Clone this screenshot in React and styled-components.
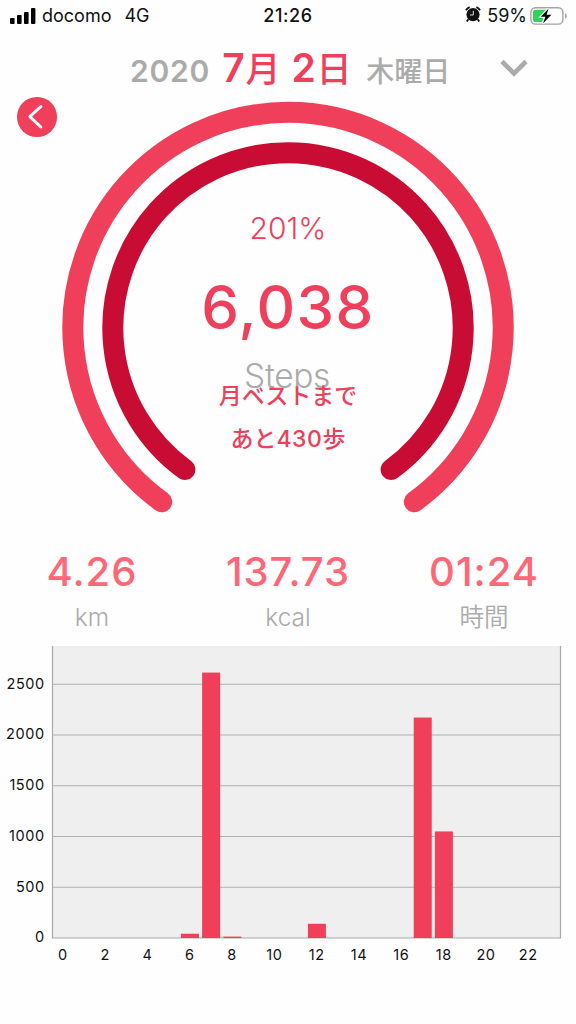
import styled, { createGlobalStyle } from "styled-components";

const hours = [
    { hour: 6, steps: 42 },
    { hour: 7, steps: 2615 },
    { hour: 8, steps: 14 },
    { hour: 12, steps: 140 },
    { hour: 17, steps: 2172 },
    { hour: 18, steps: 1050 },
]

const stats = [
    { value: '4.26', unit: 'km' },
    { value: '137.73', unit: 'kcal' },
    { value: '01:24', unit: '時間' },
]

const yTicks = [500, 1000, 1500, 2000, 2500]
const xTicks = [0, 2, 4, 6, 8, 10, 12, 14, 16, 18, 20, 22]

function StatusBar() {
    return(
        <StatusRow>
            <StatusSide>
                <svg width="26" height="16" viewBox="0 0 26 16">
                    <rect x="0" y="10" width="4.6" height="6" rx="1" />
                    <rect x="7" y="7" width="4.6" height="9" rx="1" />
                    <rect x="14" y="4" width="4.6" height="12" rx="1" />
                    <rect x="21" y="0" width="4.4" height="16" rx="1" />
                </svg>
                <Carrier>docomo</Carrier>
                <Network>4G</Network>
            </StatusSide>
            <Clock>21:26</Clock>
            <StatusSide $end>
                <AlarmIcon />
                <Percent>59%</Percent>
                <BatteryIcon />
            </StatusSide>
        </StatusRow>
    )
}

function AlarmIcon() {
    return(
        <AlarmSvg width="16" height="17" viewBox="0 0 16 17">
            <path d="M1 4.2 A8 8 0 0 1 4.6 1.2 M11.4 1.2 A8 8 0 0 1 15 4.2" fill="none" stroke="#111" strokeWidth="2" />
            <path d="M3.4 13.2 L1.8 15.6 M12.6 13.2 L14.2 15.6" stroke="#111" strokeWidth="1.8" />
            <circle cx="8" cy="8.6" r="6.6" fill="#111" />
            <path d="M8.3 4.8 V9 H5" fill="none" stroke="#ddd" strokeWidth="1" />
        </AlarmSvg>
    )
}

function BatteryIcon() {
    return(
        <svg width="38" height="20" viewBox="0 0 38 20">
            <rect x="0.9" y="1.7" width="32" height="16.4" rx="4.6" fill="none" stroke="#a3a3a3" strokeWidth="1.4" />
            <path d="M35 7 A3.2 3.2 0 0 1 35 12.8 Z" fill="#a3a3a3" />
            <path d="M5.2 3.8 H17 L12 16 H5.2 Q3 16 3 13.8 V6 Q3 3.8 5.2 3.8 Z" fill="#33cf5b" />
            <path d="M18.6 2.6 L10.8 10.8 H15.4 L13 17.4 L21.4 8.8 H16.6 Z" fill="#000" stroke="#fff" strokeWidth="2.2" paintOrder="stroke" />
        </svg>
    )
}

function Dial() {
    return(
        <DialArea>
            <Rings width="576" height="448" viewBox="0 97 576 448">
                <path d="M161.7 501.8 A215.2 215.2 0 1 1 414.3 501.8" stroke="#ef3f5b" />
                <path d="M184.9 469.5 A175.2 175.2 0 1 1 391.1 469.5" stroke="#c90c34" />
            </Rings>
            <DialText>
                <Goal>201%</Goal>
                <StepCount>6,038</StepCount>
                <StepLabel>Steps</StepLabel>
                <Best>月ベストまで<br />あと<span>430</span>歩</Best>
            </DialText>
            <BackButton>
                <svg width="39.5" height="39.5" viewBox="0 0 40 40">
                    <path d="M24.2 9.6 L13 19.8 L24.2 30.4" fill="none" stroke="#fff" strokeWidth="3" strokeLinecap="round" strokeLinejoin="round" />
                </svg>
            </BackButton>
        </DialArea>
    )
}

function HourChart() {
    const base = 292
    const scale = 0.1015

    return(
        <Chart width="576" height="330" viewBox="0 0 576 330">
            <rect x="52" y="0" width="509" height={base} fill="#efefef" />
            {yTicks.map((tick) => (
                <path key={tick} d={`M52 ${base - tick * scale} H561`} stroke="#b0b0b0" strokeWidth="1.2" />
            ))}
            <path d={`M52.5 0 V${base} H560.5 V0`} fill="none" stroke="#a9a9a9" strokeWidth="1.2" />
            {hours.map(({ hour, steps }) => (
                <rect key={hour} x={54 + hour * 21.16} y={base - steps * scale} width="18" height={steps * scale} fill="#ef3f5b" />
            ))}
            {[0, ...yTicks].map((tick) => (
                <text key={tick} x="44.8" y={base + 4.3 - tick * scale} textAnchor="end">{tick}</text>
            ))}
            {xTicks.map((tick) => (
                <text key={tick} x={62.8 + tick * 21.16} y="313.5" textAnchor="middle">{tick}</text>
            ))}
        </Chart>
    )
}

function App() {
    return(
        <Screen>
            <GlobalStyle />
            <StatusBar />
            <DateHeader>
                <Year>2020</Year>
                <Day><b>7</b>月 <b>2</b>日</Day>
                <Weekday>木曜日</Weekday>
                <Chevron width="28" height="19" viewBox="0 0 28 19">
                    <path d="M2 2.5 L14 14.5 L26 2.5" fill="none" stroke="#ababab" strokeWidth="4.6" />
                </Chevron>
            </DateHeader>
            <Dial />
            <Stats>
                {stats.map(({ value, unit }) => (
                    <Stat key={unit}>
                        <StatValue>{value}</StatValue>
                        <StatUnit>{unit}</StatUnit>
                    </Stat>
                ))}
            </Stats>
            <HourChart />
        </Screen>
    )
}

export default App

const GlobalStyle = createGlobalStyle`
  body {
    margin: 0;
    background: #fefefe;
  }
`;

const Screen = styled.div`
  width: 576px;
  height: 1024px;
  overflow: hidden;
  display: flex;
  flex-direction: column;
  background: #fefefe;
  font-family: Inter, "Noto Sans CJK JP", sans-serif;
`;

const StatusRow = styled.div`
  display: grid;
  grid-template-columns: 1fr auto 1fr;
  align-items: center;
  height: 31px;
  padding: 0 8px 0 10px;
  font-size: 18px;
  line-height: 31px;
  color: #111;
`;

const StatusSide = styled.div`
  display: flex;
  align-items: center;
  justify-content: ${({ $end }) => $end ? 'flex-end' : 'flex-start'};
`;

const AlarmSvg = styled.svg`
  margin-top: -2px;
`;

const Carrier = styled.span`
  margin-left: 6px;
`;

const Network = styled.span`
  margin-left: 13px;
`;

const Clock = styled.span`
  margin-left: -2px;
  font-weight: 500;
  letter-spacing: 0.6px;
`;

const Percent = styled.span`
  margin: 0 3px 0 6px;
`;

const DateHeader = styled.div`
  display: flex;
  align-items: baseline;
  height: 66px;
  padding-left: 130px;
  line-height: 74px;
  white-space: nowrap;
`;

const Year = styled.span`
  font-size: 30px;
  font-weight: 600;
  letter-spacing: 0.8px;
  color: #ababab;
`;

const Day = styled.span`
  margin-left: 12px;
  font-size: 35px;
  font-weight: 500;
  letter-spacing: 0.8px;
  color: #ef3f5b;

  b {
    font-size: 39px;
    font-weight: 600;
  }
`;

const Weekday = styled.span`
  margin-left: 14px;
  font-size: 28px;
  font-weight: 500;
  color: #ababab;
`;

const Chevron = styled.svg`
  align-self: flex-start;
  margin: 28px 0 0 50px;
`;

const DialArea = styled.div`
  display: grid;
  height: 448px;

  > * {
    grid-area: 1 / 1;
  }
`;

const Rings = styled.svg`
  path {
    fill: none;
    stroke-width: 21;
    stroke-linecap: round;
  }
`;

const DialText = styled.div`
  display: flex;
  flex-direction: column;
  align-items: center;
  padding-top: 111px;
  color: #ef3f5b;
`;

const Goal = styled.span`
  font-size: 30px;
  font-weight: 300;
  line-height: 40px;
`;

const StepCount = styled.span`
  margin-top: 29px;
  font-size: 60px;
  font-weight: 500;
  line-height: 60px;
  letter-spacing: 1.4px;
`;

const StepLabel = styled.span`
  margin: 19px 2px 0 0;
  font-size: 33.5px;
  font-weight: 350;
  line-height: 40px;
  letter-spacing: -0.4px;
  color: #ababab;
`;

const Best = styled.p`
  margin: -21px 0 0;
  font-size: 23px;
  font-weight: 500;
  line-height: 43px;
  text-align: center;

  span {
    letter-spacing: 0.6px;
  }
`;

const BackButton = styled.button`
  display: flex;
  justify-self: start;
  align-self: start;
  margin-left: 17px;
  padding: 0;
  border: 0;
  border-radius: 50%;
  background: #ef3f5b;
`;

const Stats = styled.div`
  display: grid;
  grid-template-columns: repeat(3, 196px);
  justify-content: center;
  height: 101px;
`;

const Stat = styled.div`
  display: flex;
  flex-direction: column;
  align-items: center;
`;

const StatValue = styled.span`
  font-size: 40px;
  font-weight: 500;
  line-height: 53px;
  letter-spacing: 1px;
  color: #ff6676;
`;

const StatUnit = styled.span`
  font-size: 24.5px;
  font-weight: 350;
  line-height: 39px;
  color: #ababab;
`;

const Chart = styled.svg`
  flex: none;

  text {
    font-size: 14.5px;
    letter-spacing: 0.6px;
    fill: #111;
  }
`;
